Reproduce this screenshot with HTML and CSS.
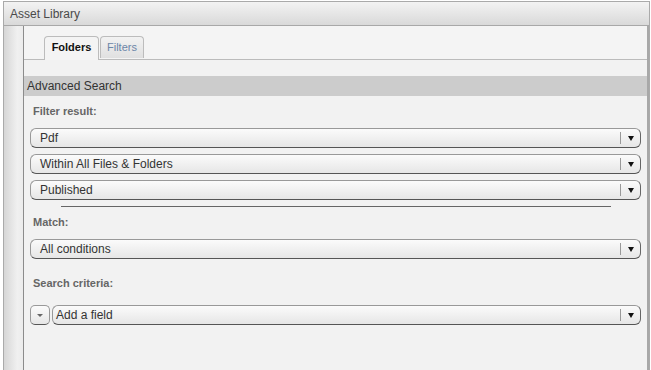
FILE: index.html
```html
<!DOCTYPE html>
<html lang="en">
<head>
    <meta charset="UTF-8">
    <meta name="viewport" content="width=device-width, initial-scale=1.0">
    <title>Asset Library</title>
    <link rel="stylesheet" href="styles.css">
</head>
<body>
    <div class="window">
        <div class="window-title">Asset Library</div>
        <div class="window-body">
            <div class="sidebar"></div>
            <div class="main">
                <div class="tabs">
                    <div class="tab active">Folders</div>
                    <div class="tab">Filters</div>
                </div>
                <div class="panel">
                    <div class="section-bar">Advanced Search</div>
                    <div class="form">
                        <div class="label">Filter result:</div>
                        <div class="select"><span>Pdf</span><i class="arrow"></i></div>
                        <div class="select"><span>Within All Files &amp; Folders</span><i class="arrow"></i></div>
                        <div class="select"><span>Published</span><i class="arrow"></i></div>
                        <div class="rule"></div>

                        <div class="label">Match:</div>
                        <div class="select"><span>All conditions</span><i class="arrow"></i></div>

                        <div class="label criteria">Search criteria:</div>
                        <div class="field-row">
                            <div class="mini-btn"><i></i></div>
                            <div class="select"><span>Add a field</span><i class="arrow"></i></div>
                        </div>
                    </div>
                </div>
            </div>
        </div>
    </div>
</body>
</html>
```

FILE: styles.css
```css
html, body {
    overflow: hidden;
}

body {
    margin: 0;
    background-color: #ffffff;
    font-family: "Liberation Sans", Arial, sans-serif;
}

.window {
    margin: 1px 1px 0 3px;
    height: 369px;
    border: 1px solid #aaaaaa;
    border-bottom: none;
    display: flex;
    flex-direction: column;
    box-sizing: border-box;
}

.window-title {
    height: 23px;
    line-height: 24px;
    padding-left: 6px;
    font-size: 12px;
    color: #4a4a4a;
    background: linear-gradient(#f3f3f3, #d9d9d9);
    border-bottom: 1px solid #a8a8a8;
}

.window-body {
    flex: 1;
    display: flex;
}

.sidebar {
    width: 19px;
    background: linear-gradient(to right, #d6d6d6, #f0f0f0 70%, #ececec);
    border-right: 1px solid #8c8c8c;
}

.main {
    flex: 1;
    display: flex;
    flex-direction: column;
    background-color: #f4f4f4;
    border-right: 2px solid #a8a8a8;
}

/* tab strip */
.tabs {
    display: flex;
    align-items: flex-start;
    padding: 10px 0 0 20px;
    height: 23px;
    border-bottom: 1px solid #bbbbbb;
}

.tab {
    height: 21px;
    line-height: 21px;
    padding: 0 6px;
    margin-right: 1px;
    font-size: 11px;
    color: #6c86a8;
    background: linear-gradient(#f2f2f2, #e0e0e0);
    border: 1px solid #bcbcbc;
    border-bottom: none;
    border-radius: 4px 4px 0 0;
}

.tab.active {
    height: 23px;
    width: 41px;
    text-align: center;
    color: #111111;
    font-weight: bold;
    background: #f4f4f4;
}

.panel {
    flex: 1;
    background-color: #f2f2f2;
    padding-top: 16px;
}

.section-bar {
    height: 20px;
    line-height: 20px;
    padding-left: 3px;
    font-size: 12px;
    color: #333333;
    background-color: #cccccc;
}

.form {
    padding: 5px 6px 0 6px;
}

.label {
    height: 20px;
    line-height: 20px;
    padding-left: 3px;
    margin-bottom: 7px;
    font-size: 11px;
    font-weight: bold;
    color: #666666;
}

.select {
    height: 20px;
    box-sizing: border-box;
    display: flex;
    align-items: center;
    margin-bottom: 6px;
    padding-left: 9px;
    font-size: 12px;
    color: #333333;
    background: linear-gradient(#fbfbfb, #e6e6e6);
    border: 1px solid #999999;
    border-bottom-color: #555555;
    border-right-color: #666666;
    border-radius: 6px;
}

.select span {
    flex: 1;
}

.select .arrow {
    width: 19px;
    height: 12px;
    border-left: 1px solid #999999;
    position: relative;
}

.select .arrow::after {
    content: "";
    position: absolute;
    left: 7px;
    top: 4px;
    border-left: 3.5px solid transparent;
    border-right: 3.5px solid transparent;
    border-top: 5px solid #111111;
}

.rule {
    height: 1px;
    background-color: #666666;
    margin: 6px 30px 5px 31px;
}

.label.criteria {
    margin-top: 14px;
    margin-bottom: 12px;
}

.field-row {
    display: flex;
    gap: 2px;
}

.field-row .select {
    flex: 1;
    padding-left: 3px;
}

.mini-btn {
    width: 20px;
    height: 20px;
    box-sizing: border-box;
    display: flex;
    align-items: center;
    justify-content: center;
    background: linear-gradient(#fbfbfb, #e6e6e6);
    border: 1px solid #999999;
    border-bottom-color: #555555;
    border-radius: 5px;
}

.mini-btn i {
    border-left: 3px solid transparent;
    border-right: 3px solid transparent;
    border-top: 3px solid #666666;
}
```
